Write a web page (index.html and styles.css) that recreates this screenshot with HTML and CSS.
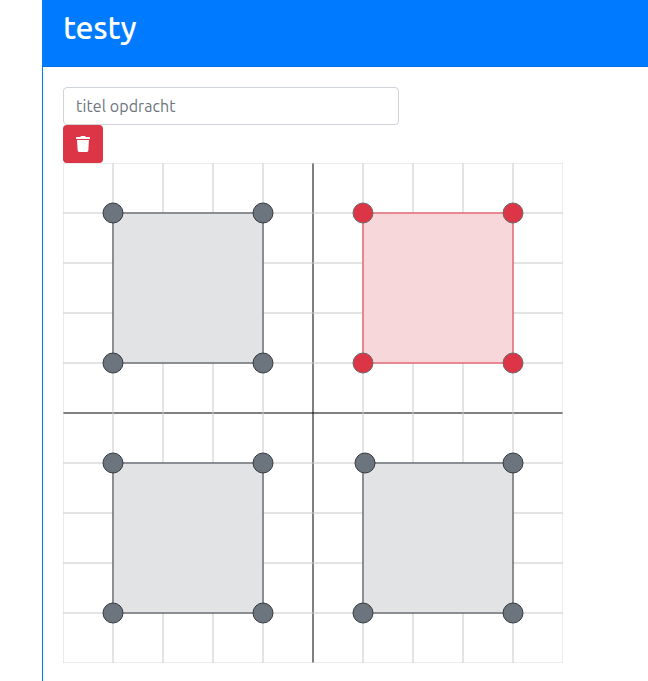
FILE: index.html
```html
<!DOCTYPE html>
<html lang="nl">
<head>
<meta charset="utf-8">
<title>testy</title>
<link rel="stylesheet" href="styles.css">
</head>
<body>
<div class="card">
  <header class="card-header"><h2>testy</h2></header>
  <main class="card-body">
    <input class="title-input" type="text" placeholder="titel opdracht">
    <button class="delete" type="button" aria-label="Verwijderen">
      <svg width="14" height="16" viewBox="0 0 448 512"><path fill="currentColor" d="M432 32H312l-9.400-18.700A24 24 0 0 0 281.100 0H166.800a23.720 23.720 0 0 0-21.400 13.300L136 32H16A16 16 0 0 0 0 48v32a16 16 0 0 0 16 16h416a16 16 0 0 0 16-16V48a16 16 0 0 0-16-16zM53.200 467a48 48 0 0 0 47.900 45h245.800a48 48 0 0 0 47.900-45L416 128H32z"/></svg>
    </button>
    <svg class="board" width="500" height="500" viewBox="0 0 500 500">
      <path class="axis" d="M250 0V500M0 250H500"/>
      <path class="grid" d="M50 0V500M100 0V500M150 0V500M200 0V500M300 0V500M350 0V500M400 0V500M450 0V500"/>
      <path class="grid" d="M0 50H500M0 100H500M0 150H500M0 200H500M0 300H500M0 350H500M0 400H500M0 450H500"/>
      <path class="grid edge" d="M0 0H500V500H0Z"/>
      <g class="shape">
        <path class="area" d="M50 50H200V200H50Z"/>
        <circle cx="50" cy="50" r="10"/><circle cx="200" cy="50" r="10"/><circle cx="200" cy="200" r="10"/><circle cx="50" cy="200" r="10"/>
      </g>
      <g class="shape selected">
        <path class="area" d="M300 50H450V200H300Z"/>
        <circle cx="300" cy="50" r="10"/><circle cx="450" cy="50" r="10"/><circle cx="450" cy="200" r="10"/><circle cx="300" cy="200" r="10"/>
      </g>
      <g class="shape">
        <path class="area" d="M50 300H200V450H50Z"/>
        <circle cx="50" cy="300" r="10"/><circle cx="200" cy="300" r="10"/><circle cx="200" cy="450" r="10"/><circle cx="50" cy="450" r="10"/>
      </g>
      <g class="shape">
        <path class="area" d="M300 300H450V450H300Z"/>
        <circle cx="302" cy="300" r="10"/><circle cx="450" cy="300" r="10"/><circle cx="450" cy="450" r="10"/><circle cx="300" cy="450" r="10"/>
      </g>
    </svg>
  </main>
</div>
</body>
</html>
```
FILE: styles.css
```css
* { box-sizing: border-box; }
body {
  margin: 0;
  height: 681px;
  overflow: hidden;
  background: #fff;
  font-family: Ubuntu, "Noto Sans", sans-serif;
}
.card {
  height: 681px;
  margin-left: 42px;
  border-left: 1px solid #007bff;
}
.card-header {
  height: 67px;
  padding: 8px 20px 0;
  background: #007bff;
  border-bottom: 1px solid #0070e8;
  color: #fff;
}
.card-header h2 {
  margin: 0;
  font-size: 32px;
  font-weight: 500;
  line-height: 38px;
  letter-spacing: -0.25px;
}
.card-body {
  display: flex;
  flex-direction: column;
  align-items: flex-start;
  padding: 20px;
}
.title-input {
  width: 336px;
  height: 38px;
  padding: 6px 12px;
  border: 1px solid #ced4da;
  border-radius: 4px;
  font-family: inherit;
  font-size: 16px;
  letter-spacing: 0.1px;
}
.title-input::placeholder { color: #6c757d; opacity: 1; }
.delete {
  display: flex;
  align-items: center;
  justify-content: center;
  width: 40px;
  height: 38px;
  padding: 0;
  border: 0;
  border-radius: 4px;
  background: #dc3545;
  color: #fff;
}
.board { display: block; flex: none; }
.grid { fill: none; stroke: #c8c8c8; }
.edge { stroke: #d8d8d8; }
.axis { fill: none; stroke: #000; }
.area { fill: #e2e3e5; stroke: #343a40; }
.shape circle { fill: #6c757d; stroke: #343a40; }
.selected .area { fill: #f7d7da; stroke: #dc3545; }
.selected circle { fill: #dc3545; stroke: #6c6a6a; }
```
